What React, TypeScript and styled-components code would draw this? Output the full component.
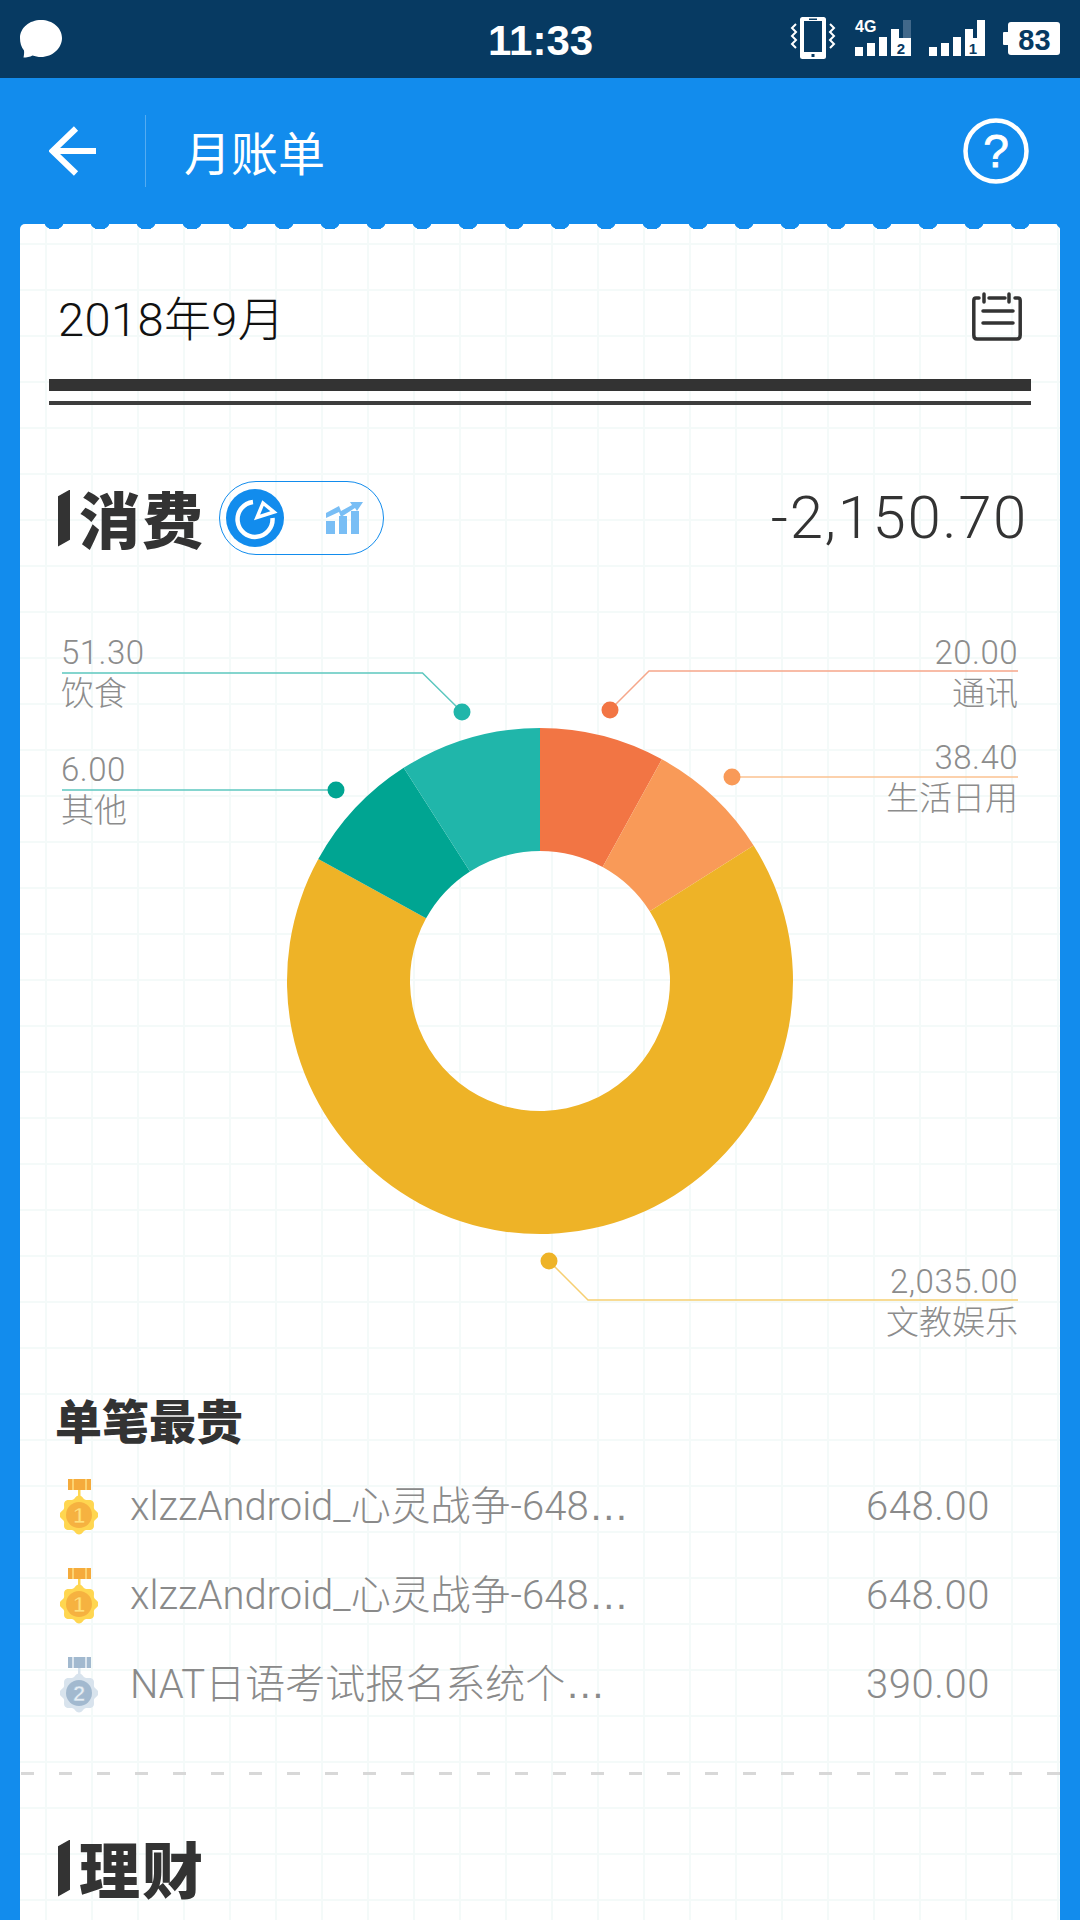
import React from "react";
import styled, { createGlobalStyle } from "styled-components";

const LIGHT = `Roboto, "Noto Sans CJK SC", sans-serif`;
const BLUE = "#128ced";

const Global = createGlobalStyle`
  html, body { margin: 0; padding: 0; background: ${BLUE}; }
  * { box-sizing: border-box; }
`;

const Screen = styled.div`
  width: 1080px;
  height: 1920px;
  overflow: hidden;
  display: flex;
  flex-direction: column;
  background: ${BLUE};
  font-family: ${LIGHT};
`;

const StatusBar = styled.div`
  height: 78px;
  flex: none;
  background: #073a62;
  position: relative;
  display: flex;
  align-items: center;
  justify-content: space-between;
  padding-left: 19px;
  padding-right: 20px;
`;

const Clock = styled.div`
  position: absolute;
  left: 488px;
  top: 17px;
  font: 700 42px/48px "Liberation Sans", sans-serif;
  color: #fff;
`;

const Header = styled.header`
  height: 146px;
  flex: none;
  display: flex;
  align-items: center;
  padding-left: 49px;
  padding-right: 51px;
`;

const Divider = styled.div`
  width: 1px;
  height: 72px;
  margin-left: 48px;
  background: rgba(255, 255, 255, 0.28);
`;

const Title = styled.h1`
  margin: 0 0 0 38px;
  flex: 1;
  font-weight: 400;
  font-size: 47px;
  line-height: 60px;
  color: #fff;
  font-family: "Noto Sans CJK SC", sans-serif;
`;

const Card = styled.main`
  position: relative;
  flex: 1;
  margin: 0 20px;
  border-radius: 5px 5px 0 0;
  background-color: #fff;
  background-image: linear-gradient(to right, #f4faf9 2px, transparent 2px),
    linear-gradient(to bottom, #f4faf9 2px, transparent 2px);
  background-size: 46px 46px;
  background-position: 25px 19px;

  &::before {
    content: "";
    position: absolute;
    left: 0;
    right: 0;
    top: 0;
    height: 5px;
    background-image: radial-gradient(circle at 23px -5px, ${BLUE} 10.5px, transparent 11px);
    background-size: 46px 10px;
    background-position: 11px 0;
    background-repeat: repeat-x;
  }
`;

const DateRow = styled.div`
  height: 155px;
  padding: 68px 38px 0 38px;
  display: flex;
  justify-content: space-between;
  align-items: flex-start;
`;

const DateText = styled.div`
  font-size: 47px;
  font-weight: 300;
  line-height: 56px;
  letter-spacing: 0.4px;
  color: #111;
`;

const DoubleRule = styled.div`
  margin: 0 29px;
  height: 26px;
  border-top: 12px solid #333;
  border-bottom: 4px solid #3d3d3d;
`;

const SectionHead = styled.div<{ $top: number }>`
  margin-top: ${(p) => p.$top}px;
  height: 74px;
  padding: 0 32px 0 38px;
  display: flex;
  align-items: center;
`;

const SectionMark = styled.span`
  width: 12px;
  height: 57px;
  background: #333;
  clip-path: polygon(0 12%, 100% 0, 100% 88%, 0 100%);
  margin-right: 9px;
`;

const SectionName = styled.h2`
  margin: 0;
  font-family: "Noto Sans CJK SC", sans-serif;
  font-weight: 900;
  font-size: 61px;
  line-height: 74px;
  letter-spacing: 2px;
  color: #333;
`;

const Toggle = styled.div`
  width: 165px;
  height: 74px;
  margin-left: 14px;
  border: 1.5px solid ${BLUE};
  border-radius: 37px;
  display: flex;
  align-items: center;
  padding-left: 6px;
  gap: 41px;
`;

const Amount = styled.div`
  margin-left: auto;
  font-size: 60px;
  font-weight: 300;
  line-height: 74px;
  letter-spacing: 1.6px;
  color: #333;
`;

const ChartCanvas = styled.div`
  position: relative;
  margin-top: 65px;
  height: 740px;
`;

const ChartSvg = styled.svg`
  display: block;
`;

const Callout = styled.div<{ $side: "left" | "right"; $top: number }>`
  position: absolute;
  top: ${(p) => p.$top}px;
  ${(p) => p.$side}: ${(p) => (p.$side === "left" ? 41 : 42)}px;
  text-align: ${(p) => p.$side};
  font-size: 33px;
  line-height: 41px;
  font-weight: 300;
  color: #8c8c8c;
  white-space: nowrap;
`;

const CalloutValue = styled.div`
  letter-spacing: 0.5px;
`;

const CalloutName = styled.div``;

const BestTitle = styled.h3`
  margin: 29px 0 13px 35px;
  font-family: "Noto Sans CJK SC", sans-serif;
  font-weight: 900;
  font-size: 47px;
  line-height: 60px;
  color: #333;
`;

const Row = styled.div`
  height: 89px;
  padding: 0 70px 0 40px;
  display: flex;
  align-items: center;
`;

const RowName = styled.div`
  margin-left: 32px;
  flex: 1;
  font-size: 40px;
  line-height: 50px;
  font-weight: 300;
  color: #8a8a8a;
  white-space: nowrap;
`;

const Ellipsis = styled.span`
  font-family: "Liberation Sans", sans-serif;
`;

const RowAmount = styled.div`
  font-size: 40px;
  line-height: 50px;
  font-weight: 300;
  letter-spacing: 0.6px;
  color: #8a8a8a;
`;

const Dashed = styled.div`
  margin-top: 43px;
  height: 3px;
  background-image: linear-gradient(to right, #d8d8d8 13px, transparent 13px);
  background-size: 38px 3px;
  background-position: 1px 0;
`;

const polar = (cx: number, cy: number, r: number, deg: number): [number, number] => {
  const a = (deg * Math.PI) / 180;
  return [cx + r * Math.sin(a), cy - r * Math.cos(a)];
};

const slicePath = (from: number, to: number) => {
  const [cx, cy, R, r] = [520, 361, 253, 130];
  const large = to - from > 180 ? 1 : 0;
  const p1 = polar(cx, cy, R, from);
  const p2 = polar(cx, cy, R, to);
  const p3 = polar(cx, cy, r, to);
  const p4 = polar(cx, cy, r, from);
  return `M${p1[0]} ${p1[1]}A${R} ${R} 0 ${large} 1 ${p2[0]} ${p2[1]}L${p3[0]} ${p3[1]}A${r} ${r} 0 ${large} 0 ${p4[0]} ${p4[1]}Z`;
};

const slices = [
  { from: 0, to: 28.8, color: "#f27544" },
  { from: 28.8, to: 57.6, color: "#f99a58" },
  { from: 57.6, to: 298.8, color: "#eeb327" },
  { from: 298.8, to: 327.4, color: "#00a592" },
  { from: 327.4, to: 360, color: "#20b6aa" },
];

const leaders = [
  { d: "M42 53H402.5L442 92", line: "#5cc7bf", dot: [442, 92], color: "#20b6aa" },
  { d: "M42 170H316", line: "#5cc7bf", dot: [316, 170], color: "#00a592" },
  { d: "M998 51H629L590 90", line: "#f6a78a", dot: [590, 90], color: "#f27544" },
  { d: "M998 157H712", line: "#fbc291", dot: [712, 157], color: "#f99a58" },
  { d: "M529 641L568 680H998", line: "#f6cf72", dot: [529, 641], color: "#eeb327" },
];

const callouts = [
  { side: "left" as const, top: 12, value: "51.30", name: "饮食" },
  { side: "left" as const, top: 129, value: "6.00", name: "其他" },
  { side: "right" as const, top: 12, value: "20.00", name: "通讯" },
  { side: "right" as const, top: 117, value: "38.40", name: "生活日用" },
  { side: "right" as const, top: 641, value: "2,035.00", name: "文教娱乐" },
];

const badgePath = () => {
  let d = "";
  const N = 96;
  for (let i = 0; i <= N; i++) {
    const a = (i / N) * Math.PI * 2;
    const r = 18 + 1.6 * Math.cos(8 * a);
    const x = 19 + r * Math.sin(a);
    const y = 36 - r * Math.cos(a);
    d += `${i ? "L" : "M"}${x.toFixed(2)} ${y.toFixed(2)}`;
  }
  return d + "Z";
};

const Medal = ({ rank }: { rank: 1 | 2 }) => {
  const c =
    rank === 1
      ? { ribbon: "#f5ab3c", stripe: "#fcd371", outer: "#ffd650", inner: "#f6b240", num: "#ffe27a" }
      : { ribbon: "#a2b9cf", stripe: "#dbe5ee", outer: "#d8e3ed", inner: "#a2b9cf", num: "#e6eef5" };
  return (
    <svg width="38" height="56" viewBox="0 0 38 56">
      <rect x="8" y="0" width="23" height="11" fill={c.ribbon} />
      <rect x="12" y="0" width="2" height="11" fill={c.stripe} />
      <rect x="25" y="0" width="2" height="11" fill={c.stripe} />
      <rect x="18" y="11" width="2.5" height="8" fill={c.outer} />
      <path d={badgePath()} fill={c.outer} />
      <circle cx="19" cy="36" r="13" fill={c.inner} />
      <text x="19" y="44" textAnchor="middle" fontFamily="Liberation Sans, sans-serif" fontWeight="700" fontSize="22" fill={c.num} stroke={c.ribbon} strokeWidth="0.6">
        {rank}
      </text>
    </svg>
  );
};

const rows = [
  { rank: 1 as const, name: "xlzzAndroid_心灵战争-648", amount: "648.00" },
  { rank: 1 as const, name: "xlzzAndroid_心灵战争-648", amount: "648.00" },
  { rank: 2 as const, name: "NAT日语考试报名系统个", amount: "390.00" },
];

const StatusIcons = () => (
  <svg width="270" height="78" viewBox="790 0 270 78">
    <rect x="800" y="17" width="26" height="42" rx="2.500" fill="#fff" />
    <rect x="804" y="21" width="18" height="31" fill="#073a62" />
    <rect x="809" y="18.500" width="8" height="1.500" fill="#073a62" />
    <rect x="811.500" y="54" width="3" height="3" fill="#073a62" />
    <path d="M796 24l-4 4 4 4-4 4 4 4-4 4 4 4" fill="none" stroke="#fff" strokeWidth="2" />
    <path d="M830 24l4 4-4 4 4 4-4 4 4 4-4 4" fill="none" stroke="#fff" strokeWidth="2" />
    <text x="855" y="32" fontFamily="Liberation Sans, sans-serif" fontWeight="700" fontSize="16" fill="#fff">4G</text>
    <g fill="#fff">
      <rect x="855" y="47" width="8" height="9" />
      <rect x="867" y="43" width="8" height="13" />
      <rect x="879" y="37" width="8" height="19" />
      <rect x="891" y="29" width="8" height="27" />
      <rect x="891" y="38" width="20" height="18" />
      <rect x="929" y="47" width="8" height="9" />
      <rect x="941" y="43" width="8" height="13" />
      <rect x="953" y="37" width="8" height="19" />
      <rect x="965" y="29" width="8" height="27" />
      <rect x="977" y="20" width="8" height="36" />
      <rect x="965" y="38" width="20" height="18" />
    </g>
    <rect x="903" y="20" width="8" height="18" fill="#41688a" />
    <text x="901" y="54" textAnchor="middle" fontFamily="Liberation Sans, sans-serif" fontWeight="700" fontSize="15" fill="#073a62">2</text>
    <text x="973" y="54" textAnchor="middle" fontFamily="Liberation Sans, sans-serif" fontWeight="700" fontSize="15" fill="#073a62">1</text>
    <rect x="1003" y="32" width="6" height="13" rx="1" fill="#fff" />
    <rect x="1008" y="22" width="52" height="33" rx="3" fill="#fff" />
    <text x="1034.500" y="50" textAnchor="middle" fontFamily="Liberation Sans, sans-serif" fontWeight="700" fontSize="29" fill="#073a62">83</text>
  </svg>
);

export default function App() {
  return (
    <Screen>
      <Global />
      <StatusBar>
        <svg width="44" height="40" viewBox="0 0 44 40">
          <path d="M22 1C33.500 1 43 8.800 43 19S33.500 38 22 38c-3 0-6-.6-8.500-1.500C11 38 7.500 38.500 4.500 38.500c.5-2.500 .8-4.800.5-7C2.200 28 1 24 1 19 1 8.800 10.500 1 22 1Z" fill="#fff" />
        </svg>
        <Clock>11:33</Clock>
        <StatusIcons />
      </StatusBar>
      <Header>
        <svg width="48" height="50" viewBox="0 0 48 50">
          <path d="M47 25H3M27 2.500 3.500 25 27 47.500" fill="none" stroke="#fff" strokeWidth="6" />
        </svg>
        <Divider />
        <Title>月账单</Title>
        <svg width="66" height="66" viewBox="0 0 66 66">
          <circle cx="33" cy="33" r="30.500" fill="none" stroke="#fff" strokeWidth="4.500" />
          <text x="33" y="49" textAnchor="middle" fontFamily="Liberation Sans, sans-serif" fontSize="46" stroke="#fff" strokeWidth="0.8" fill="#fff">?</text>
        </svg>
      </Header>
      <Card>
        <DateRow>
          <DateText>2018年9月</DateText>
          <svg width="50" height="50" viewBox="0 0 50 50">
            <path d="M7 6H4Q1.800 6 1.800 8.500V43Q1.800 47 5 47H45Q48.200 47 48.200 43V8.500Q48.200 6 46 6H43M17 6H33" fill="none" stroke="#333" strokeWidth="3.500" strokeLinecap="round" />
            <path d="M12 2V10M37 2V10M11 19H41M11 31H41" fill="none" stroke="#333" strokeWidth="3.500" strokeLinecap="round" />
          </svg>
        </DateRow>
        <DoubleRule />
        <SectionHead $top={76}>
          <SectionMark />
          <SectionName>消费</SectionName>
          <Toggle>
            <svg width="58" height="58" viewBox="0 0 58 58">
              <circle cx="29" cy="29" r="29" fill={BLUE} />
              <path d="M46.500 29A17.500 17.500 0 1 1 27 13" fill="none" stroke="#fff" strokeWidth="4.500" />
              <path d="M31 28.500 37 14 48 23Z" fill="none" stroke="#fff" strokeWidth="3.500" />
            </svg>
            <svg width="40" height="34" viewBox="0 0 40 34">
              <g fill="#79bef5">
                <rect x="1" y="20" width="9" height="13" />
                <rect x="14" y="15" width="8" height="18" />
                <rect x="26" y="10" width="8" height="23" />
                <path d="M1 12 14 5l2 5L27 4l-2-3L38 1l-6 9-2-3-14 9-2-5L1 17Z" />
              </g>
            </svg>
          </Toggle>
          <Amount>-2,150.70</Amount>
        </SectionHead>
        <ChartCanvas>
          <ChartSvg width="1040" height="740" viewBox="0 0 1040 740">
            {slices.map((s) => (
              <path key={s.from} d={slicePath(s.from, s.to)} fill={s.color} />
            ))}
            {leaders.map((l) => (
              <g key={l.d}>
                <path d={l.d} fill="none" stroke={l.line} strokeWidth="1.500" />
                <circle cx={l.dot[0]} cy={l.dot[1]} r="8.500" fill={l.color} />
              </g>
            ))}
          </ChartSvg>
          {callouts.map((c) => (
            <Callout key={c.value} $side={c.side} $top={c.top}>
              <CalloutValue>{c.value}</CalloutValue>
              <CalloutName>{c.name}</CalloutName>
            </Callout>
          ))}
        </ChartCanvas>
        <BestTitle>单笔最贵</BestTitle>
        {rows.map((r, i) => (
          <Row key={i}>
            <Medal rank={r.rank} />
            <RowName>
              {r.name}
              <Ellipsis>…</Ellipsis>
            </RowName>
            <RowAmount>{r.amount}</RowAmount>
          </Row>
        ))}
        <Dashed />
        <SectionHead $top={56}>
          <SectionMark />
          <SectionName>理财</SectionName>
        </SectionHead>
      </Card>
    </Screen>
  );
}
